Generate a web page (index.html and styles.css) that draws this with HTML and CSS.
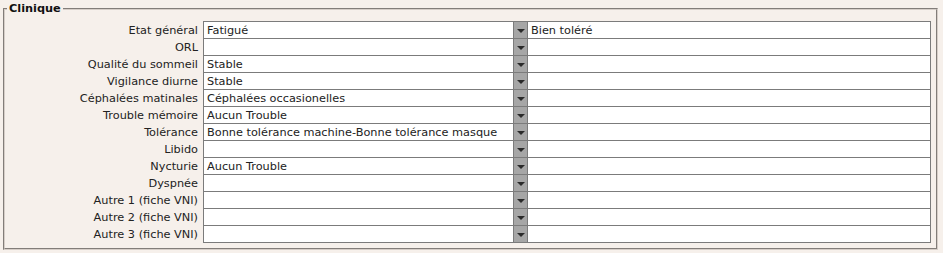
FILE: index.html
```html
<!DOCTYPE html>
<html lang="fr">
<head>
    <meta charset="UTF-8">
    <title>Clinique</title>
    <link rel="stylesheet" href="styles.css">
</head>
<body>

    <fieldset class="bloc">
        <legend>Clinique</legend>
        <div class="rows">
            <div class="row">
                <label>Etat général</label>
                <div class="sel">Fatigué</div>
                <div class="btn"><span class="arrow"></span></div>
                <div class="txt">Bien toléré</div>
            </div>
            <div class="row">
                <label>ORL</label>
                <div class="sel"></div>
                <div class="btn"><span class="arrow"></span></div>
                <div class="txt"></div>
            </div>
            <div class="row">
                <label>Qualité du sommeil</label>
                <div class="sel">Stable</div>
                <div class="btn"><span class="arrow"></span></div>
                <div class="txt"></div>
            </div>
            <div class="row">
                <label>Vigilance diurne</label>
                <div class="sel">Stable</div>
                <div class="btn"><span class="arrow"></span></div>
                <div class="txt"></div>
            </div>
            <div class="row">
                <label>Céphalées matinales</label>
                <div class="sel">Céphalées occasionelles</div>
                <div class="btn"><span class="arrow"></span></div>
                <div class="txt"></div>
            </div>
            <div class="row">
                <label>Trouble mémoire</label>
                <div class="sel">Aucun Trouble</div>
                <div class="btn"><span class="arrow"></span></div>
                <div class="txt"></div>
            </div>
            <div class="row">
                <label>Tolérance</label>
                <div class="sel">Bonne tolérance machine-Bonne tolérance masque</div>
                <div class="btn"><span class="arrow"></span></div>
                <div class="txt"></div>
            </div>
            <div class="row">
                <label>Libido</label>
                <div class="sel"></div>
                <div class="btn"><span class="arrow"></span></div>
                <div class="txt"></div>
            </div>
            <div class="row">
                <label>Nycturie</label>
                <div class="sel">Aucun Trouble</div>
                <div class="btn"><span class="arrow"></span></div>
                <div class="txt"></div>
            </div>
            <div class="row">
                <label>Dyspnée</label>
                <div class="sel"></div>
                <div class="btn"><span class="arrow"></span></div>
                <div class="txt"></div>
            </div>
            <div class="row">
                <label>Autre 1 (fiche VNI)</label>
                <div class="sel"></div>
                <div class="btn"><span class="arrow"></span></div>
                <div class="txt"></div>
            </div>
            <div class="row">
                <label>Autre 2 (fiche VNI)</label>
                <div class="sel"></div>
                <div class="btn"><span class="arrow"></span></div>
                <div class="txt"></div>
            </div>
            <div class="row">
                <label>Autre 3 (fiche VNI)</label>
                <div class="sel"></div>
                <div class="btn"><span class="arrow"></span></div>
                <div class="txt"></div>
            </div>
        </div>
    </fieldset>

</body>
</html>
```

FILE: styles.css
```css
body {
    margin: 0;
    background: #f6f0eb;
    font-family: "DejaVu Sans", Verdana, sans-serif;
    font-size: 11.3px;
    color: #222;
}
.bloc {
    margin: 1px 5px 0 3px;
    padding: 0 5px 6px 0;
    border: 2px groove #d6cec8;
}
.bloc legend {
    font-weight: bold;
    color: #111;
    padding: 0 2px;
    margin-left: 2px;
    line-height: 15px;
}
.rows {
    margin-top: 5px;
    display: flex;
    flex-direction: column;
}
.row {
    display: flex;
    height: 18px;
    margin-bottom: -1px;
}
.row label {
    width: 193px;
    padding-right: 5px;
    text-align: right;
    line-height: 19px;
    white-space: nowrap;
}
.sel, .txt {
    box-sizing: border-box;
    height: 18px;
    border: 1px solid #7b7b7b;
    background: #fff;
    line-height: 17px;
    padding-left: 3px;
    white-space: nowrap;
    overflow: hidden;
}
.sel {
    width: 311px;
}
.btn {
    width: 13px;
    height: 18px;
    background: #a6a6a6;
    box-sizing: border-box;
    border-top: 1px solid #7b7b7b;
    border-bottom: 1px solid #7b7b7b;
    display: flex;
    align-items: center;
    justify-content: center;
}
.arrow {
    width: 0;
    height: 0;
    border-left: 4px solid transparent;
    border-right: 4px solid transparent;
    border-top: 4px solid #2a2a2a;
    margin-top: 2px;
}
.txt {
    flex: 1;
}
```
